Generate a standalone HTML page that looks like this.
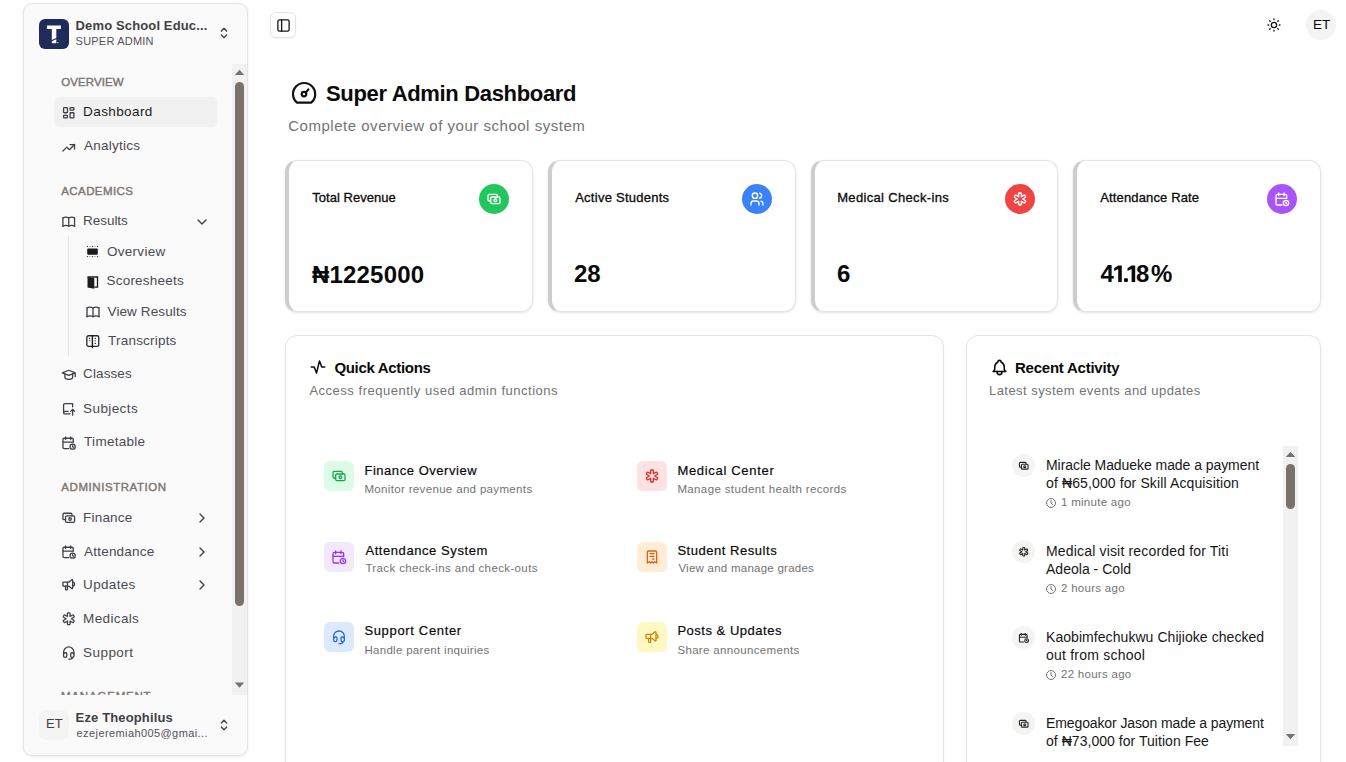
<!DOCTYPE html>
<html><head><meta charset="utf-8"><style>*{box-sizing:border-box;margin:0;padding:0}
html,body{width:1346px;height:762px;overflow:hidden;background:#fff;font-family:"Liberation Sans",sans-serif;color:#0a0a0a}
.abs{position:absolute}
.t{white-space:nowrap;line-height:normal}
svg{display:block;overflow:visible}
.ic{fill:none;stroke:currentColor;stroke-linecap:round;stroke-linejoin:round}
.card{background:#fff;border:1px solid #e6e4e2;border-left:4px solid #cdcdcd;border-radius:12px;box-shadow:0 1px 3px rgba(0,0,0,.1)}
.panel{background:#fff;border:1px solid #e6e4e2;border-radius:12px;box-shadow:0 1px 2px rgba(0,0,0,.05)}
</style></head><body>
<div class="abs" style="left:23px;top:3px;width:225px;height:753px;background:#fafafa;border:1px solid #e4e4e7;border-radius:9px;box-shadow:0 1px 3px rgba(0,0,0,.07)"></div>
<div class="abs" style="left:39px;top:19px;width:30px;height:30px;background:#1f2b59;border-radius:6px"></div>
<svg class="abs" style="left:39px;top:19px" width="30" height="30" viewBox="0 0 30 30"><g fill="#fff"><rect x="7.9" y="6.5" width="14" height="3.5"/><path d="M12.8 10H17.3V18.9L12.8 20.9Z"/><path d="M12.8 22.3L17.3 20.2V24.2H12.8Z"/><circle cx="18.9" cy="23.6" r=".6"/></g></svg>
<div class="abs t" style="left:75.6px;top:18px;font-size:13px;color:#3f3f46;font-weight:bold;letter-spacing:0.133px">Demo School Educ...</div>
<div class="abs t" style="left:75.6px;top:35px;font-size:11px;color:#52525b;font-weight:normal;letter-spacing:0.21px">SUPER ADMIN</div>
<svg class="abs ic" style="left:216px;top:25px;width:16px;height:16px;color:#3f3f46;stroke-width:2" viewBox="0 0 24 24"><path d="M8 9l4 -4l4 4"/><path d="M16 15l-4 4l-4 -4"/></svg>
<div class="abs t" style="left:61.3px;top:76px;font-size:11.5px;color:#7d7570;font-weight:normal;letter-spacing:0.086px;-webkit-text-stroke:0.4px #7d7570">OVERVIEW</div>
<div class="abs" style="left:54px;top:97px;width:163px;height:30px;background:#f1f1f1;border-radius:6px"></div>
<svg class="abs ic" style="left:61.25px;top:105.25px;width:15.5px;height:15.5px;color:#3f3f46;stroke-width:2" viewBox="0 0 24 24"><path d="M5 4h4a1 1 0 0 1 1 1v6a1 1 0 0 1 -1 1h-4a1 1 0 0 1 -1 -1v-6a1 1 0 0 1 1 -1"/><path d="M5 16h4a1 1 0 0 1 1 1v2a1 1 0 0 1 -1 1h-4a1 1 0 0 1 -1 -1v-2a1 1 0 0 1 1 -1"/><path d="M15 12h4a1 1 0 0 1 1 1v6a1 1 0 0 1 -1 1h-4a1 1 0 0 1 -1 -1v-6a1 1 0 0 1 1 -1"/><path d="M15 4h4a1 1 0 0 1 1 1v2a1 1 0 0 1 -1 1h-4a1 1 0 0 1 -1 -1v-2a1 1 0 0 1 1 -1"/></svg>
<div class="abs t" style="left:83.1px;top:104px;font-size:13.5px;color:#1c1c1f;font-weight:normal;letter-spacing:0.4px">Dashboard</div>
<svg class="abs ic" style="left:61.25px;top:140.25px;width:15.5px;height:15.5px;color:#3f3f46;stroke-width:2" viewBox="0 0 24 24"><path d="M3 17l6 -6l4 4l8 -8"/><path d="M14 7l7 0l0 7"/></svg>
<div class="abs t" style="left:84.1px;top:138px;font-size:13.5px;color:#4a4a52;font-weight:normal;letter-spacing:0.238px">Analytics</div>
<div class="abs t" style="left:61.3px;top:185px;font-size:11.5px;color:#7d7570;font-weight:normal;letter-spacing:0.4px;-webkit-text-stroke:0.4px #7d7570">ACADEMICS</div>
<svg class="abs ic" style="left:61.25px;top:214.25px;width:15.5px;height:15.5px;color:#3f3f46;stroke-width:2" viewBox="0 0 24 24"><path d="M3 19a9 9 0 0 1 9 0a9 9 0 0 1 9 0"/><path d="M3 6a9 9 0 0 1 9 0a9 9 0 0 1 9 0"/><path d="M3 6l0 13"/><path d="M12 6l0 13"/><path d="M21 6l0 13"/></svg>
<div class="abs t" style="left:83.1px;top:213px;font-size:13.5px;color:#4a4a52;font-weight:normal;letter-spacing:-0.05px">Results</div>
<svg class="abs ic" style="left:194px;top:214px;width:16px;height:16px;color:#3f3f46;stroke-width:2" viewBox="0 0 24 24"><path d="M6 9l6 6l6 -6"/></svg>
<div class="abs" style="left:68px;top:236px;width:1px;height:120px;background:#e4e4e7"></div>
<div class="abs t" style="left:106.9px;top:244px;font-size:13.5px;color:#4a4a52;font-weight:normal;letter-spacing:0.3px">Overview</div>
<div class="abs t" style="left:106.5px;top:273px;font-size:13.5px;color:#4a4a52;font-weight:normal;letter-spacing:0.21px">Scoresheets</div>
<div class="abs t" style="left:107.5px;top:304px;font-size:13.5px;color:#4a4a52;font-weight:normal;letter-spacing:0.118px">View Results</div>
<div class="abs t" style="left:108.1px;top:333px;font-size:13.5px;color:#4a4a52;font-weight:normal;letter-spacing:0.2px">Transcripts</div>
<svg class="abs" style="left:86px;top:245px" width="13" height="13" viewBox="0 0 13 13"><rect x="1.2" y="3.5" width="10.6" height="6.3" rx="1" fill="#1c1c1f"/><g fill="#333"><circle cx="1.5" cy="1.4" r=".7"/><circle cx="6.5" cy="1.4" r=".7"/><circle cx="11.5" cy="1.4" r=".7"/><circle cx="1.5" cy="11.6" r=".7"/><circle cx="6.5" cy="11.6" r=".7"/><circle cx="11.5" cy="11.6" r=".7"/></g><g fill="#999"><rect x="3.2" y="1" width="1.5" height=".8"/><rect x="8.2" y="1" width="1.5" height=".8"/><rect x="3.2" y="11.2" width="1.5" height=".8"/><rect x="8.2" y="11.2" width="1.5" height=".8"/></g></svg>
<svg class="abs" style="left:86px;top:276px" width="13" height="13" viewBox="0 0 13 13"><path d="M1.5 1h10v10.2h-3.2" fill="none" stroke="#1c1c1f" stroke-width="1.3"/><path d="M1.5 1l6.8 1.2v10.5l-6.8-1.3z" fill="#1c1c1f"/></svg>
<svg class="abs ic" style="left:85px;top:303.5px;width:16px;height:16px;color:#3f3f46;stroke-width:2" viewBox="0 0 24 24"><path d="M3 19a9 9 0 0 1 9 0a9 9 0 0 1 9 0"/><path d="M3 6a9 9 0 0 1 9 0a9 9 0 0 1 9 0"/><path d="M3 6l0 13"/><path d="M12 6l0 13"/><path d="M21 6l0 13"/></svg>
<svg class="abs" style="left:84px;top:332px" width="18" height="18" viewBox="0 0 18 18"><rect x="2.85" y="3.75" width="11.9" height="10.6" rx="1.6" fill="none" stroke="#27272a" stroke-width="1.3"/><path d="M8.4 3.8V15.6" stroke="#18181b" stroke-width="1.4" stroke-linecap="round"/><g fill="#222"><circle cx="5.6" cy="6.4" r=".7"/><circle cx="11.3" cy="6.4" r=".7"/><circle cx="11.3" cy="11.4" r=".7"/></g><g fill="#666"><circle cx="5.6" cy="8.8" r=".7"/><circle cx="11.3" cy="8.8" r=".7"/></g></svg>
<svg class="abs ic" style="left:61.25px;top:367.25px;width:15.5px;height:15.5px;color:#3f3f46;stroke-width:2" viewBox="0 0 24 24"><path d="M22 9l-10 -4l-10 4l10 4l10 -4v6"/><path d="M6 10.6v5.4a6 3 0 0 0 12 0v-5.4"/></svg>
<div class="abs t" style="left:83.1px;top:366px;font-size:13.5px;color:#4a4a52;font-weight:normal;letter-spacing:0.1px">Classes</div>
<svg class="abs ic" style="left:61.25px;top:401.25px;width:15.5px;height:15.5px;color:#3f3f46;stroke-width:2" viewBox="0 0 24 24"><path d="M14 20h-8a2 2 0 0 1 -2 -2v-12a2 2 0 0 1 2 -2h12v5"/><path d="M11 16h-5a2 2 0 0 0 -2 2"/><path d="M15 16l3 -3l3 3"/><path d="M18 13v9"/></svg>
<div class="abs t" style="left:83.1px;top:401px;font-size:13.5px;color:#4a4a52;font-weight:normal;letter-spacing:0.4px">Subjects</div>
<svg class="abs ic" style="left:61.25px;top:435.25px;width:15.5px;height:15.5px;color:#3f3f46;stroke-width:2" viewBox="0 0 24 24"><path d="M11.795 21h-6.795a2 2 0 0 1 -2 -2v-12a2 2 0 0 1 2 -2h12a2 2 0 0 1 2 2v4"/><path d="M18 18m-4 0a4 4 0 1 0 8 0a4 4 0 1 0 -8 0"/><path d="M15 3v4"/><path d="M7 3v4"/><path d="M3 11h16"/><path d="M18 16.496v1.504l1 1"/></svg>
<div class="abs t" style="left:84.1px;top:434px;font-size:13.5px;color:#4a4a52;font-weight:normal;letter-spacing:0.275px">Timetable</div>
<div class="abs t" style="left:61.3px;top:481px;font-size:11.5px;color:#7d7570;font-weight:normal;letter-spacing:0.562px;-webkit-text-stroke:0.4px #7d7570">ADMINISTRATION</div>
<svg class="abs ic" style="left:61.25px;top:510.25px;width:15.5px;height:15.5px;color:#3f3f46;stroke-width:2" viewBox="0 0 24 24"><path d="M7 9m0 2a2 2 0 0 1 2 -2h10a2 2 0 0 1 2 2v6a2 2 0 0 1 -2 2h-10a2 2 0 0 1 -2 -2z"/><path d="M14 14m-2 0a2 2 0 1 0 4 0a2 2 0 1 0 -4 0"/><path d="M17 9v-2a2 2 0 0 0 -2 -2h-10a2 2 0 0 0 -2 2v6a2 2 0 0 0 2 2h2"/></svg>
<div class="abs t" style="left:83.1px;top:510px;font-size:13.5px;color:#4a4a52;font-weight:normal;letter-spacing:0.183px">Finance</div>
<svg class="abs ic" style="left:194px;top:510px;width:16px;height:16px;color:#3f3f46;stroke-width:2" viewBox="0 0 24 24"><path d="M9 6l6 6l-6 6"/></svg>
<svg class="abs ic" style="left:61.25px;top:544.25px;width:15.5px;height:15.5px;color:#3f3f46;stroke-width:2" viewBox="0 0 24 24"><path d="M11.795 21h-6.795a2 2 0 0 1 -2 -2v-12a2 2 0 0 1 2 -2h12a2 2 0 0 1 2 2v4"/><path d="M18 18m-4 0a4 4 0 1 0 8 0a4 4 0 1 0 -8 0"/><path d="M15 3v4"/><path d="M7 3v4"/><path d="M3 11h16"/><path d="M18 16.496v1.504l1 1"/></svg>
<div class="abs t" style="left:84.1px;top:544px;font-size:13.5px;color:#4a4a52;font-weight:normal;letter-spacing:0.2px">Attendance</div>
<svg class="abs ic" style="left:194px;top:544px;width:16px;height:16px;color:#3f3f46;stroke-width:2" viewBox="0 0 24 24"><path d="M9 6l6 6l-6 6"/></svg>
<svg class="abs ic" style="left:61.25px;top:577.25px;width:15.5px;height:15.5px;color:#3f3f46;stroke-width:2" viewBox="0 0 24 24"><path d="M18 8a3 3 0 0 1 0 6"/><path d="M10 8v11a1 1 0 0 1 -1 1h-1a1 1 0 0 1 -1 -1v-5"/><path d="M12 8h0l4.524 -3.77a.9 .9 0 0 1 1.476 .692v12.156a.9 .9 0 0 1 -1.476 .692l-4.524 -3.77h-8a1 1 0 0 1 -1 -1v-4a1 1 0 0 1 1 -1h8"/></svg>
<div class="abs t" style="left:83.1px;top:577px;font-size:13.5px;color:#4a4a52;font-weight:normal;letter-spacing:0.317px">Updates</div>
<svg class="abs ic" style="left:194px;top:577px;width:16px;height:16px;color:#3f3f46;stroke-width:2" viewBox="0 0 24 24"><path d="M9 6l6 6l-6 6"/></svg>
<svg class="abs ic" style="left:61.25px;top:611.25px;width:15.5px;height:15.5px;color:#3f3f46;stroke-width:2" viewBox="0 0 24 24"><path d="M13 3a1 1 0 0 1 1 1v4.535l3.928 -2.267a1 1 0 0 1 1.366 .366l1 1.732a1 1 0 0 1 -.366 1.366l-3.927 2.268l3.927 2.269a1 1 0 0 1 .366 1.366l-1 1.732a1 1 0 0 1 -1.366 .366l-3.928 -2.269v4.536a1 1 0 0 1 -1 1h-2a1 1 0 0 1 -1 -1v-4.536l-3.928 2.268a1 1 0 0 1 -1.366 -.366l-1 -1.732a1 1 0 0 1 .366 -1.366l3.927 -2.268l-3.927 -2.268a1 1 0 0 1 -.366 -1.366l1 -1.732a1 1 0 0 1 1.366 -.366l3.928 2.267v-4.535a1 1 0 0 1 1 -1h2z"/></svg>
<div class="abs t" style="left:83.1px;top:611px;font-size:13.5px;color:#4a4a52;font-weight:normal;letter-spacing:0.357px">Medicals</div>
<svg class="abs ic" style="left:61.25px;top:645.25px;width:15.5px;height:15.5px;color:#3f3f46;stroke-width:2" viewBox="0 0 24 24"><path d="M4 14v-3a8 8 0 1 1 16 0v3"/><path d="M18 19c0 1.657 -2.686 3 -6 3"/><path d="M4 14a2 2 0 0 1 2 -2h1a2 2 0 0 1 2 2v3a2 2 0 0 1 -2 2h-1a2 2 0 0 1 -2 -2v-3z"/><path d="M15 14a2 2 0 0 1 2 -2h1a2 2 0 0 1 2 2v3a2 2 0 0 1 -2 2h-1a2 2 0 0 1 -2 -2v-3z"/></svg>
<div class="abs t" style="left:83.1px;top:645px;font-size:13.5px;color:#4a4a52;font-weight:normal;letter-spacing:0.433px">Support</div>
<div class="abs" style="left:50px;top:690px;width:180px;height:5px;overflow:hidden"><div class="abs t" style="left:11px;top:0px;font-size:11.5px;color:#7d7570;font-weight:normal;letter-spacing:0.8px;-webkit-text-stroke:0.4px #7d7570">MANAGEMENT</div></div>
<div class="abs" style="left:232px;top:64px;width:15px;height:631px;background:#f1f1f1"></div>
<svg class="abs" style="left:232px;top:64px" width="15" height="631" viewBox="0 0 15 631"><path d="M2.8 11h9.4l-4.7-5.2z" fill="#7a716b"/><path d="M2.8 618.5h9.4l-4.7 5.2z" fill="#7a716b"/></svg>
<div class="abs" style="left:235px;top:82px;width:9px;height:524px;background:#7a716b;border-radius:5px"></div>
<div class="abs" style="left:39px;top:710px;width:30px;height:30px;background:#f4f4f3;border-radius:7px"></div>
<div class="abs t" style="left:46px;top:716px;font-size:13px;color:#3f3f46;font-weight:normal;letter-spacing:0px">ET</div>
<div class="abs t" style="left:75.6px;top:710px;font-size:13px;color:#3f3f46;font-weight:bold;letter-spacing:0.138px">Eze Theophilus</div>
<div class="abs t" style="left:76.6px;top:727px;font-size:11px;color:#52525b;font-weight:normal;letter-spacing:0.405px">ezejeremiah005@gmai...</div>
<svg class="abs ic" style="left:216px;top:717px;width:16px;height:16px;color:#3f3f46;stroke-width:2" viewBox="0 0 24 24"><path d="M8 9l4 -4l4 4"/><path d="M16 15l-4 4l-4 -4"/></svg>
<div class="abs" style="left:270px;top:12px;width:26px;height:26px;border:1px solid #e6e4e2;border-radius:6px;box-shadow:0 1px 2px rgba(0,0,0,.05);background:#fff"></div>
<svg class="abs ic" style="left:275.8px;top:17.9px;width:15px;height:15px;color:#171717;stroke-width:2.1" viewBox="0 0 24 24"><rect x="3" y="3" width="18" height="18" rx="2.5"/><path d="M9 3v18"/></svg>
<svg class="abs ic" style="left:1265.5px;top:16.5px;width:16px;height:16px;color:#171717;stroke-width:2" viewBox="0 0 24 24"><path d="M12 12m-4 0a4 4 0 1 0 8 0a4 4 0 1 0 -8 0"/><path d="M3 12h1m8 -9v1m8 8h1m-9 8v1m-6.4 -15.4l.7 .7m12.1 -.7l-.7 .7m0 11.4l.7 .7m-12.1 -.7l-.7 .7"/></svg>
<div class="abs" style="left:1306px;top:10px;width:30px;height:30px;border-radius:50%;background:#f4f4f4"></div>
<div class="abs t" style="left:1313px;top:17px;font-size:13.5px;color:#0a0a0a;font-weight:normal;letter-spacing:0px">ET</div>
<svg class="abs" style="left:289px;top:79px" width="30" height="30" viewBox="0 0 30 30" fill="none" stroke="#111" stroke-width="2.2" stroke-linecap="round" stroke-linejoin="round"><path d="M8.1 23.7A11.1 11.1 0 1 1 22.1 23.7Z"/><circle cx="15" cy="15.1" r="2.3"/><path d="M16.7 13.4L19.4 10.4"/></svg>
<div class="abs t" style="left:326px;top:81px;font-size:22px;color:#0a0a0a;font-weight:bold;letter-spacing:-0.33px">Super Admin Dashboard</div>
<div class="abs t" style="left:288.2px;top:117px;font-size:15px;color:#737373;font-weight:normal;letter-spacing:0.521px">Complete overview of your school system</div>
<div class="abs card" style="left:285px;top:160px;width:248px;height:152px"></div>
<div class="abs t" style="left:312.2px;top:190px;font-size:13px;color:#0a0a0a;font-weight:normal;letter-spacing:0.042px;-webkit-text-stroke:0.3px #0a0a0a">Total Revenue</div>
<div class="abs t" style="left:312px;top:261px;font-size:24px;color:#0a0a0a;font-weight:bold;letter-spacing:0.186px">₦1225000</div>
<div class="abs" style="left:479px;top:184px;width:30px;height:30px;border-radius:50%;background:#22c55e"></div>
<svg class="abs ic" style="left:486px;top:191px;width:16px;height:16px;color:#fff;stroke-width:2" viewBox="0 0 24 24"><path d="M7 9m0 2a2 2 0 0 1 2 -2h10a2 2 0 0 1 2 2v6a2 2 0 0 1 -2 2h-10a2 2 0 0 1 -2 -2z"/><path d="M14 14m-2 0a2 2 0 1 0 4 0a2 2 0 1 0 -4 0"/><path d="M17 9v-2a2 2 0 0 0 -2 -2h-10a2 2 0 0 0 -2 2v6a2 2 0 0 0 2 2h2"/></svg>
<div class="abs card" style="left:548px;top:160px;width:248px;height:152px"></div>
<div class="abs t" style="left:575.2px;top:190px;font-size:13px;color:#0a0a0a;font-weight:normal;letter-spacing:0.257px;-webkit-text-stroke:0.3px #0a0a0a">Active Students</div>
<div class="abs t" style="left:574px;top:260px;font-size:24px;color:#0a0a0a;font-weight:bold;letter-spacing:0px">28</div>
<div class="abs" style="left:742px;top:184px;width:30px;height:30px;border-radius:50%;background:#3b82f6"></div>
<svg class="abs ic" style="left:749px;top:191px;width:16px;height:16px;color:#fff;stroke-width:2" viewBox="0 0 24 24"><path d="M9 7m-4 0a4 4 0 1 0 8 0a4 4 0 1 0 -8 0"/><path d="M3 21v-2a4 4 0 0 1 4 -4h4a4 4 0 0 1 4 4v2"/><path d="M16 3.13a4 4 0 0 1 0 7.75"/><path d="M21 21v-2a4 4 0 0 0 -3 -3.85"/></svg>
<div class="abs card" style="left:811px;top:160px;width:247px;height:152px"></div>
<div class="abs t" style="left:837.2px;top:190px;font-size:13px;color:#0a0a0a;font-weight:normal;letter-spacing:0.331px;-webkit-text-stroke:0.3px #0a0a0a">Medical Check-ins</div>
<div class="abs t" style="left:837px;top:260px;font-size:24px;color:#0a0a0a;font-weight:bold;letter-spacing:0px">6</div>
<div class="abs" style="left:1005px;top:184px;width:30px;height:30px;border-radius:50%;background:#ef4444"></div>
<svg class="abs ic" style="left:1012px;top:191px;width:16px;height:16px;color:#fff;stroke-width:2" viewBox="0 0 24 24"><path d="M13 3a1 1 0 0 1 1 1v4.535l3.928 -2.267a1 1 0 0 1 1.366 .366l1 1.732a1 1 0 0 1 -.366 1.366l-3.927 2.268l3.927 2.269a1 1 0 0 1 .366 1.366l-1 1.732a1 1 0 0 1 -1.366 .366l-3.928 -2.269v4.536a1 1 0 0 1 -1 1h-2a1 1 0 0 1 -1 -1v-4.536l-3.928 2.268a1 1 0 0 1 -1.366 -.366l-1 -1.732a1 1 0 0 1 .366 -1.366l3.927 -2.268l-3.927 -2.268a1 1 0 0 1 -.366 -1.366l1 -1.732a1 1 0 0 1 1.366 -.366l3.928 2.267v-4.535a1 1 0 0 1 1 -1h2z"/></svg>
<div class="abs card" style="left:1073px;top:160px;width:248px;height:152px"></div>
<div class="abs t" style="left:1100.2px;top:190px;font-size:13px;color:#0a0a0a;font-weight:normal;letter-spacing:0.143px;-webkit-text-stroke:0.3px #0a0a0a">Attendance Rate</div>
<div class="abs t" style="left:1100.4px;top:260px;font-size:24px;color:#0a0a0a;font-weight:bold;letter-spacing:0px">4</div>
<div class="abs t" style="left:1136px;top:260px;font-size:24px;color:#0a0a0a;font-weight:bold;letter-spacing:0px">8</div>
<div class="abs t" style="left:1151.1px;top:260px;font-size:24px;color:#0a0a0a;font-weight:bold;letter-spacing:0px">%</div>
<svg class="abs" style="left:0;top:0" width="1346" height="762" viewBox="0 0 1346 762"><g fill="#0a0a0a"><path d="M1118.2 265.5H1121.8V281.9H1118.2V269L1114.1000000000001 271.1V268.2Z"/><path d="M1131.6 265.5H1135.1999999999998V281.9H1131.6V269L1127.5 271.1V268.2Z"/><rect x="1124" y="278.3" width="3.9" height="3.6" rx=".8"/></g></svg>
<div class="abs" style="left:1267px;top:184px;width:30px;height:30px;border-radius:50%;background:#a855f7"></div>
<svg class="abs ic" style="left:1274px;top:191px;width:16px;height:16px;color:#fff;stroke-width:2" viewBox="0 0 24 24"><path d="M11.795 21h-6.795a2 2 0 0 1 -2 -2v-12a2 2 0 0 1 2 -2h12a2 2 0 0 1 2 2v4"/><path d="M18 18m-4 0a4 4 0 1 0 8 0a4 4 0 1 0 -8 0"/><path d="M15 3v4"/><path d="M7 3v4"/><path d="M3 11h16"/><path d="M18 16.496v1.504l1 1"/></svg>
<div class="abs panel" style="left:285px;top:335px;width:659px;height:460px"></div>
<svg class="abs ic" style="left:309px;top:358px;width:18px;height:18px;color:#0a0a0a;stroke-width:2" viewBox="0 0 24 24"><path d="M3 12h4l3 8l4 -16l3 8h4"/></svg>
<div class="abs t" style="left:334.4px;top:359px;font-size:15px;color:#0a0a0a;font-weight:bold;letter-spacing:-0.317px">Quick Actions</div>
<div class="abs t" style="left:309.4px;top:383px;font-size:13px;color:#737373;font-weight:normal;letter-spacing:0.516px">Access frequently used admin functions</div>
<div class="abs" style="left:324px;top:461px;width:30px;height:30px;border-radius:6px;background:#dcfce7"></div>
<svg class="abs ic" style="left:331px;top:468px;width:16px;height:16px;color:#16a34a;stroke-width:1.9" viewBox="0 0 24 24"><path d="M7 9m0 2a2 2 0 0 1 2 -2h10a2 2 0 0 1 2 2v6a2 2 0 0 1 -2 2h-10a2 2 0 0 1 -2 -2z"/><path d="M14 14m-2 0a2 2 0 1 0 4 0a2 2 0 1 0 -4 0"/><path d="M17 9v-2a2 2 0 0 0 -2 -2h-10a2 2 0 0 0 -2 2v6a2 2 0 0 0 2 2h2"/></svg>
<div class="abs t" style="left:364.4px;top:463px;font-size:13px;color:#0a0a0a;font-weight:normal;letter-spacing:0.547px;-webkit-text-stroke:0.2px #0a0a0a">Finance Overview</div>
<div class="abs t" style="left:364.4px;top:483px;font-size:11.5px;color:#737373;font-weight:normal;letter-spacing:0.341px">Monitor revenue and payments</div>
<div class="abs" style="left:324px;top:542px;width:30px;height:30px;border-radius:6px;background:#f3e8ff"></div>
<svg class="abs ic" style="left:331px;top:549px;width:16px;height:16px;color:#9333ea;stroke-width:1.9" viewBox="0 0 24 24"><path d="M11.795 21h-6.795a2 2 0 0 1 -2 -2v-12a2 2 0 0 1 2 -2h12a2 2 0 0 1 2 2v4"/><path d="M18 18m-4 0a4 4 0 1 0 8 0a4 4 0 1 0 -8 0"/><path d="M15 3v4"/><path d="M7 3v4"/><path d="M3 11h16"/><path d="M18 16.496v1.504l1 1"/></svg>
<div class="abs t" style="left:365.4px;top:543px;font-size:13px;color:#0a0a0a;font-weight:normal;letter-spacing:0.575px;-webkit-text-stroke:0.2px #0a0a0a">Attendance System</div>
<div class="abs t" style="left:365.4px;top:562px;font-size:11.5px;color:#737373;font-weight:normal;letter-spacing:0.372px">Track check-ins and check-outs</div>
<div class="abs" style="left:324px;top:622px;width:30px;height:30px;border-radius:6px;background:#dbeafe"></div>
<svg class="abs ic" style="left:331px;top:629px;width:16px;height:16px;color:#2563eb;stroke-width:1.9" viewBox="0 0 24 24"><path d="M4 14v-3a8 8 0 1 1 16 0v3"/><path d="M18 19c0 1.657 -2.686 3 -6 3"/><path d="M4 14a2 2 0 0 1 2 -2h1a2 2 0 0 1 2 2v3a2 2 0 0 1 -2 2h-1a2 2 0 0 1 -2 -2v-3z"/><path d="M15 14a2 2 0 0 1 2 -2h1a2 2 0 0 1 2 2v3a2 2 0 0 1 -2 2h-1a2 2 0 0 1 -2 -2v-3z"/></svg>
<div class="abs t" style="left:364.4px;top:623px;font-size:13px;color:#0a0a0a;font-weight:normal;letter-spacing:0.662px;-webkit-text-stroke:0.2px #0a0a0a">Support Center</div>
<div class="abs t" style="left:364.4px;top:644px;font-size:11.5px;color:#737373;font-weight:normal;letter-spacing:0.3px">Handle parent inquiries</div>
<div class="abs" style="left:637px;top:461px;width:30px;height:30px;border-radius:6px;background:#fee2e2"></div>
<svg class="abs ic" style="left:644px;top:468px;width:16px;height:16px;color:#dc2626;stroke-width:1.9" viewBox="0 0 24 24"><path d="M13 3a1 1 0 0 1 1 1v4.535l3.928 -2.267a1 1 0 0 1 1.366 .366l1 1.732a1 1 0 0 1 -.366 1.366l-3.927 2.268l3.927 2.269a1 1 0 0 1 .366 1.366l-1 1.732a1 1 0 0 1 -1.366 .366l-3.928 -2.269v4.536a1 1 0 0 1 -1 1h-2a1 1 0 0 1 -1 -1v-4.536l-3.928 2.268a1 1 0 0 1 -1.366 -.366l-1 -1.732a1 1 0 0 1 .366 -1.366l3.927 -2.268l-3.927 -2.268a1 1 0 0 1 -.366 -1.366l1 -1.732a1 1 0 0 1 1.366 -.366l3.928 2.267v-4.535a1 1 0 0 1 1 -1h2z"/></svg>
<div class="abs t" style="left:677.4px;top:463px;font-size:13px;color:#0a0a0a;font-weight:normal;letter-spacing:0.685px;-webkit-text-stroke:0.2px #0a0a0a">Medical Center</div>
<div class="abs t" style="left:677.4px;top:483px;font-size:11.5px;color:#737373;font-weight:normal;letter-spacing:0.371px">Manage student health records</div>
<div class="abs" style="left:637px;top:542px;width:30px;height:30px;border-radius:6px;background:#ffedd5"></div>
<svg class="abs ic" style="left:644px;top:549px;width:16px;height:16px;color:#ea580c;stroke-width:1.9" viewBox="0 0 24 24"><path d="M5 21v-16a2 2 0 0 1 2 -2h10a2 2 0 0 1 2 2v16l-3 -2l-2 2l-2 -2l-2 2l-2 -2l-3 2m4 -14h6m-6 4h6m-2 4h2"/></svg>
<div class="abs t" style="left:677.4px;top:543px;font-size:13px;color:#0a0a0a;font-weight:normal;letter-spacing:0.536px;-webkit-text-stroke:0.2px #0a0a0a">Student Results</div>
<div class="abs t" style="left:678.4px;top:562px;font-size:11.5px;color:#737373;font-weight:normal;letter-spacing:0.248px">View and manage grades</div>
<div class="abs" style="left:637px;top:622px;width:30px;height:30px;border-radius:6px;background:#fef9c3"></div>
<svg class="abs ic" style="left:644px;top:629px;width:16px;height:16px;color:#ca8a04;stroke-width:1.9" viewBox="0 0 24 24"><path d="M18 8a3 3 0 0 1 0 6"/><path d="M10 8v11a1 1 0 0 1 -1 1h-1a1 1 0 0 1 -1 -1v-5"/><path d="M12 8h0l4.524 -3.77a.9 .9 0 0 1 1.476 .692v12.156a.9 .9 0 0 1 -1.476 .692l-4.524 -3.77h-8a1 1 0 0 1 -1 -1v-4a1 1 0 0 1 1 -1h8"/></svg>
<div class="abs t" style="left:677.4px;top:623px;font-size:13px;color:#0a0a0a;font-weight:normal;letter-spacing:0.514px;-webkit-text-stroke:0.2px #0a0a0a">Posts &amp; Updates</div>
<div class="abs t" style="left:677.4px;top:644px;font-size:11.5px;color:#737373;font-weight:normal;letter-spacing:0.339px">Share announcements</div>
<div class="abs panel" style="left:966px;top:335px;width:355px;height:460px"></div>
<svg class="abs ic" style="left:989.5px;top:358px;width:19px;height:19px;color:#0a0a0a;stroke-width:2" viewBox="0 0 24 24"><path d="M10 5a2 2 0 1 1 4 0a7 7 0 0 1 4 6v3a4 4 0 0 0 2 3h-16a4 4 0 0 0 2 -3v-3a7 7 0 0 1 4 -6"/><path d="M9 17v1a3 3 0 0 0 6 0v-1"/></svg>
<div class="abs t" style="left:1015px;top:359px;font-size:15px;color:#0a0a0a;font-weight:bold;letter-spacing:-0.236px">Recent Activity</div>
<div class="abs t" style="left:989px;top:383px;font-size:13px;color:#737373;font-weight:normal;letter-spacing:0.452px">Latest system events and updates</div>
<div class="abs" style="left:1012px;top:454px;width:23px;height:23px;border-radius:50%;background:#f4f4f3"></div>
<svg class="abs ic" style="left:1017.8px;top:460px;width:11.5px;height:11.5px;color:#262626;stroke-width:2.3" viewBox="0 0 24 24"><path d="M7 9m0 2a2 2 0 0 1 2 -2h10a2 2 0 0 1 2 2v6a2 2 0 0 1 -2 2h-10a2 2 0 0 1 -2 -2z"/><path d="M14 14m-2 0a2 2 0 1 0 4 0a2 2 0 1 0 -4 0"/><path d="M17 9v-2a2 2 0 0 0 -2 -2h-10a2 2 0 0 0 -2 2v6a2 2 0 0 0 2 2h2"/></svg>
<div class="abs t" style="left:1046px;top:455.5px;font-size:14px;line-height:18.4px;color:#171717"><span style="letter-spacing:-0.06px">Miracle Madueke made a payment</span><br><span style="letter-spacing:0.12px">of ₦65,000 for Skill Acquisition</span></div>
<svg class="abs ic" style="left:1045px;top:497px;width:12px;height:12px;color:#737373;stroke-width:2" viewBox="0 0 24 24"><path d="M3 12a9 9 0 1 0 18 0a9 9 0 0 0 -18 0"/><path d="M12 7v5l3 3"/></svg>
<div class="abs t" style="left:1061px;top:496px;font-size:11.5px;color:#737373;font-weight:normal;letter-spacing:0.28px">1 minute ago</div>
<div class="abs" style="left:1012px;top:540px;width:23px;height:23px;border-radius:50%;background:#f4f4f3"></div>
<svg class="abs ic" style="left:1017.8px;top:546px;width:11.5px;height:11.5px;color:#262626;stroke-width:2.3" viewBox="0 0 24 24"><path d="M13 3a1 1 0 0 1 1 1v4.535l3.928 -2.267a1 1 0 0 1 1.366 .366l1 1.732a1 1 0 0 1 -.366 1.366l-3.927 2.268l3.927 2.269a1 1 0 0 1 .366 1.366l-1 1.732a1 1 0 0 1 -1.366 .366l-3.928 -2.269v4.536a1 1 0 0 1 -1 1h-2a1 1 0 0 1 -1 -1v-4.536l-3.928 2.268a1 1 0 0 1 -1.366 -.366l-1 -1.732a1 1 0 0 1 .366 -1.366l3.927 -2.268l-3.927 -2.268a1 1 0 0 1 -.366 -1.366l1 -1.732a1 1 0 0 1 1.366 -.366l3.928 2.267v-4.535a1 1 0 0 1 1 -1h2z"/></svg>
<div class="abs t" style="left:1046px;top:541.5px;font-size:14px;line-height:18.4px;color:#171717"><span style="letter-spacing:0.17px">Medical visit recorded for Titi</span><br><span style="letter-spacing:0.02px">Adeola - Cold</span></div>
<svg class="abs ic" style="left:1045px;top:583px;width:12px;height:12px;color:#737373;stroke-width:2" viewBox="0 0 24 24"><path d="M3 12a9 9 0 1 0 18 0a9 9 0 0 0 -18 0"/><path d="M12 7v5l3 3"/></svg>
<div class="abs t" style="left:1061px;top:582px;font-size:11.5px;color:#737373;font-weight:normal;letter-spacing:0.28px">2 hours ago</div>
<div class="abs" style="left:1012px;top:626px;width:23px;height:23px;border-radius:50%;background:#f4f4f3"></div>
<svg class="abs ic" style="left:1017.8px;top:632px;width:11.5px;height:11.5px;color:#262626;stroke-width:2.3" viewBox="0 0 24 24"><path d="M11.795 21h-6.795a2 2 0 0 1 -2 -2v-12a2 2 0 0 1 2 -2h12a2 2 0 0 1 2 2v4"/><path d="M18 18m-4 0a4 4 0 1 0 8 0a4 4 0 1 0 -8 0"/><path d="M15 3v4"/><path d="M7 3v4"/><path d="M3 11h16"/><path d="M18 16.496v1.504l1 1"/></svg>
<div class="abs t" style="left:1046px;top:627.5px;font-size:14px;line-height:18.4px;color:#171717"><span style="letter-spacing:0.06px">Kaobimfechukwu Chijioke checked</span><br><span style="letter-spacing:0.22px">out from school</span></div>
<svg class="abs ic" style="left:1045px;top:669px;width:12px;height:12px;color:#737373;stroke-width:2" viewBox="0 0 24 24"><path d="M3 12a9 9 0 1 0 18 0a9 9 0 0 0 -18 0"/><path d="M12 7v5l3 3"/></svg>
<div class="abs t" style="left:1061px;top:668px;font-size:11.5px;color:#737373;font-weight:normal;letter-spacing:0.28px">22 hours ago</div>
<div class="abs" style="left:1012px;top:712px;width:23px;height:23px;border-radius:50%;background:#f4f4f3"></div>
<svg class="abs ic" style="left:1017.8px;top:718px;width:11.5px;height:11.5px;color:#262626;stroke-width:2.3" viewBox="0 0 24 24"><path d="M7 9m0 2a2 2 0 0 1 2 -2h10a2 2 0 0 1 2 2v6a2 2 0 0 1 -2 2h-10a2 2 0 0 1 -2 -2z"/><path d="M14 14m-2 0a2 2 0 1 0 4 0a2 2 0 1 0 -4 0"/><path d="M17 9v-2a2 2 0 0 0 -2 -2h-10a2 2 0 0 0 -2 2v6a2 2 0 0 0 2 2h2"/></svg>
<div class="abs t" style="left:1046px;top:713.5px;font-size:14px;line-height:18.4px;color:#171717"><span style="letter-spacing:-0.11px">Emegoakor Jason made a payment</span><br><span style="letter-spacing:0.04px">of ₦73,000 for Tuition Fee</span></div>
<div class="abs" style="left:1283px;top:446px;width:15px;height:300px;background:#f1f1f1"></div>
<svg class="abs" style="left:1283px;top:446px" width="15" height="300" viewBox="0 0 15 300"><path d="M2.8 11h9.4l-4.7-5.2z" fill="#7a716b"/><path d="M2.8 288h9.4l-4.7 5.2z" fill="#7a716b"/></svg>
<div class="abs" style="left:1286px;top:464px;width:9px;height:45px;background:#7a716b;border-radius:5px"></div>
</body></html>
